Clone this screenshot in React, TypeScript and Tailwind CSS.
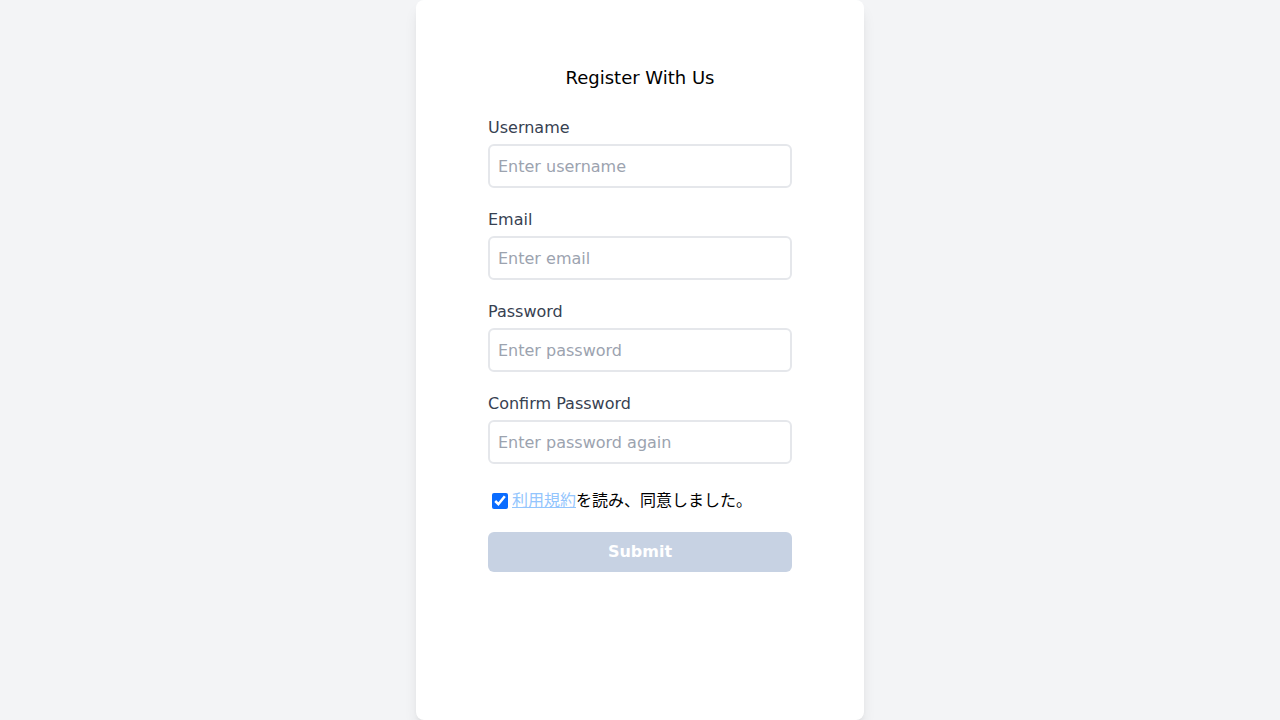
import { useState } from 'react';

const fields = [
  { id: 'username', label: 'Username', type: 'text', placeholder: 'Enter username' },
  { id: 'email', label: 'Email', type: 'email', placeholder: 'Enter email' },
  { id: 'password', label: 'Password', type: 'password', placeholder: 'Enter password' },
  { id: 'confirm', label: 'Confirm Password', type: 'password', placeholder: 'Enter password again' },
];

export default function App() {
  const [agreed, setAgreed] = useState(true);

  return (
    <div
      className="min-h-screen bg-[#f3f4f6] flex justify-center"
      style={{ fontFamily: '"DejaVu Sans", "Noto Sans CJK JP", sans-serif' }}
    >
      <div className="w-[448px] h-[720px] bg-white rounded-lg shadow-lg px-[72px] pt-16">
        <h1 className="text-lg leading-7 text-black text-center mb-6">Register With Us</h1>

        <form onSubmit={(e) => e.preventDefault()}>
          {fields.map((f) => (
            <div key={f.id} className="mb-5">
              <label htmlFor={f.id} className="block text-base leading-6 text-[#374151] mb-1">
                {f.label}
              </label>
              <input
                id={f.id}
                type={f.type}
                placeholder={f.placeholder}
                className="w-full h-11 px-2 border-2 border-[#e5e7eb] rounded-md text-base text-gray-700 placeholder:text-[#9ca3af] outline-none"
              />
            </div>
          ))}

          {/* Terms */}
          <div className="flex items-center mt-[25px] mb-[19px] h-6 pl-1">
            <input
              type="checkbox"
              checked={agreed}
              onChange={(e) => setAgreed(e.target.checked)}
              className="w-4 h-4 m-0 mr-1 accent-[#0a6cff]"
            />
            <span className="text-base text-black">
              <a href="#" className="text-[#93c5fd] underline">利用規約</a>を読み、同意しました。
            </span>
          </div>

          <button
            type="submit"
            disabled
            className="w-full h-10 rounded-md bg-[#c7d2e3] text-white font-bold text-base"
          >
            Submit
          </button>
        </form>
      </div>
    </div>
  );
}
